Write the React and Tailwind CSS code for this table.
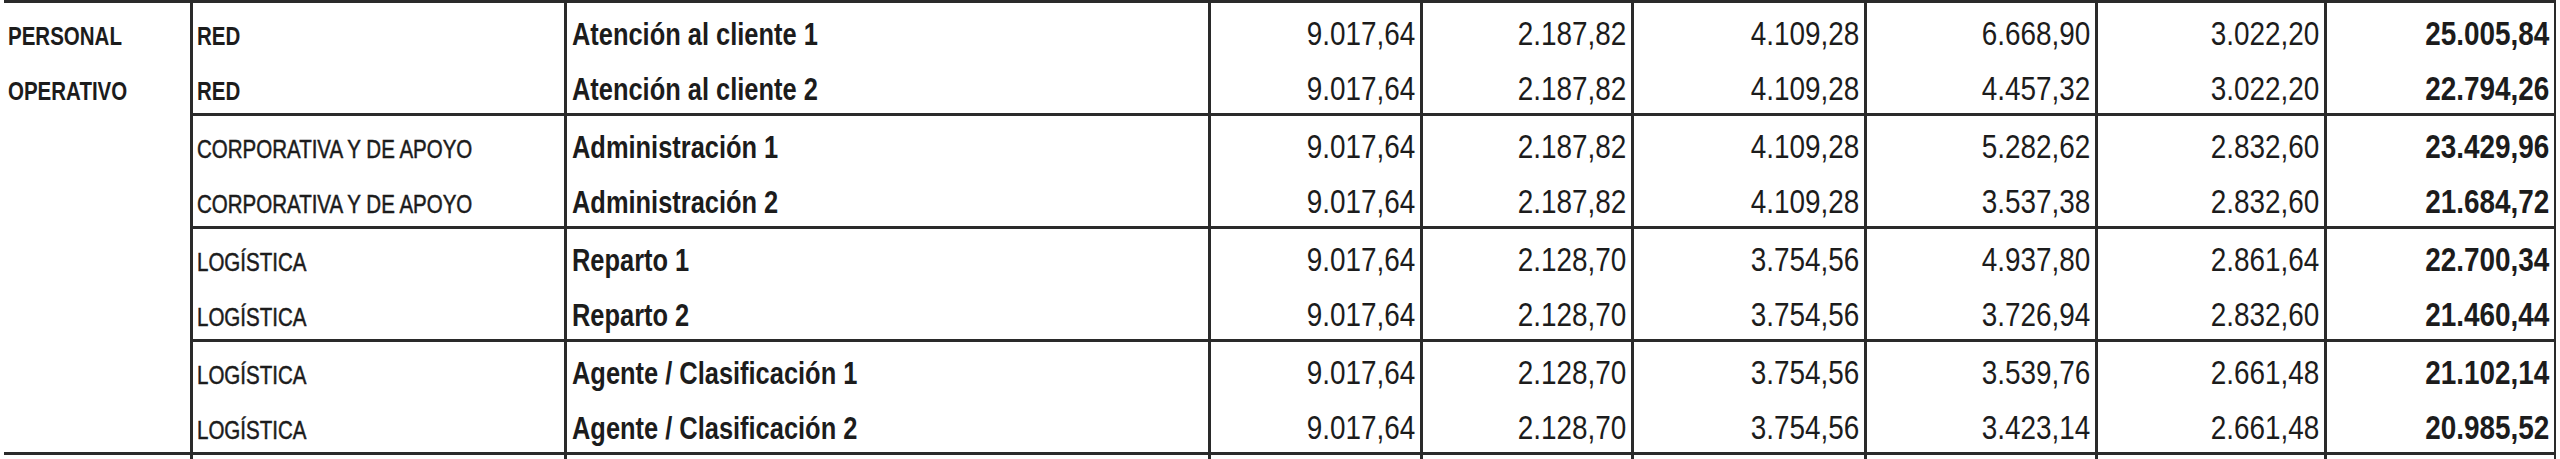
import React from "react";

const FONT = { fontFamily: '"Liberation Sans", Arial, sans-serif' };

const groups = [
  [
    { area: "RED", areaBold: true, job: "Atención al cliente 1", v: ["9.017,64", "2.187,82", "4.109,28", "6.668,90", "3.022,20"], t: "25.005,84" },
    { area: "RED", areaBold: true, job: "Atención al cliente 2", v: ["9.017,64", "2.187,82", "4.109,28", "4.457,32", "3.022,20"], t: "22.794,26" },
  ],
  [
    { area: "CORPORATIVA Y DE APOYO", job: "Administración 1", v: ["9.017,64", "2.187,82", "4.109,28", "5.282,62", "2.832,60"], t: "23.429,96" },
    { area: "CORPORATIVA Y DE APOYO", job: "Administración 2", v: ["9.017,64", "2.187,82", "4.109,28", "3.537,38", "2.832,60"], t: "21.684,72" },
  ],
  [
    { area: "LOGÍSTICA", job: "Reparto 1", v: ["9.017,64", "2.128,70", "3.754,56", "4.937,80", "2.861,64"], t: "22.700,34" },
    { area: "LOGÍSTICA", job: "Reparto 2", v: ["9.017,64", "2.128,70", "3.754,56", "3.726,94", "2.832,60"], t: "21.460,44" },
  ],
  [
    { area: "LOGÍSTICA", job: "Agente / Clasificación 1", v: ["9.017,64", "2.128,70", "3.754,56", "3.539,76", "2.661,48"], t: "21.102,14" },
    { area: "LOGÍSTICA", job: "Agente / Clasificación 2", v: ["9.017,64", "2.128,70", "3.754,56", "3.423,14", "2.661,48"], t: "20.985,52" },
  ],
];

const numW = ["w-[212px]", "w-[211px]", "w-[233px]", "w-[231px]", "w-[229px]"];

function L({ children }) {
  return <span className="inline-block whitespace-nowrap scale-x-[0.82] origin-left">{children}</span>;
}
function R({ children }) {
  return <span className="inline-block whitespace-nowrap scale-x-[0.82] origin-right">{children}</span>;
}

function Row({ r }) {
  return (
    <div className="flex h-[55px]">
      <div className={`w-[374px] h-full border-l-[3px] border-[#2a2a2a] flex items-end pl-[4px] pb-[9px] text-[25px] leading-none ${r.areaBold ? "font-bold" : "font-normal [-webkit-text-stroke:0.5px_#1c1c1c]"}`}>
        <L>{r.area}</L>
      </div>
      <div className="w-[644px] h-full border-l-[3px] border-[#2a2a2a] flex items-end pl-[5px] pb-[8px] text-[31px] leading-none font-bold">
        <L>{r.job}</L>
      </div>
      {r.v.map((x, i) => (
        <div key={i} className={`${numW[i]} h-full border-l-[3px] border-[#2a2a2a] flex items-end justify-end pr-[5px] pb-[8px] text-[34px] leading-none font-normal`}>
          <R>{x}</R>
        </div>
      ))}
      <div className="w-[232px] h-full border-l-[3px] border-r-[2px] border-[#2a2a2a] flex items-end justify-end pr-[5px] pb-[8px] text-[34px] leading-none font-bold">
        <R>{r.t}</R>
      </div>
    </div>
  );
}

function Stub() {
  const ws = ["w-[374px]", "w-[644px]", ...numW];
  return (
    <div className="flex h-[4px]">
      {ws.map((w, i) => (
        <div key={i} className={`${w} h-full border-l-[3px] border-[#2a2a2a]`} />
      ))}
      <div className="w-[232px] h-full border-l-[3px] border-r-[2px] border-[#2a2a2a]" />
    </div>
  );
}

export default function App() {
  return (
    <div className="w-[2560px] h-[459px] bg-white overflow-hidden text-[#1c1c1c]" style={FONT}>
      <div className="flex items-start">
        <div className="ml-[4px] w-[186px] h-[455px] border-y-[3px] border-[#2a2a2a] flex flex-col">
          <div className="h-[55px] flex items-end pl-[4px] pb-[9px] text-[25px] leading-none font-bold"><L>PERSONAL</L></div>
          <div className="h-[55px] flex items-end pl-[4px] pb-[9px] text-[25px] leading-none font-bold"><L>OPERATIVO</L></div>
        </div>
        <div className="w-[2366px] flex flex-col">
          <div className="h-[3px] bg-[#2a2a2a]" />
          {groups.map((g, gi) => (
            <div key={gi} className="border-b-[3px] border-[#2a2a2a]">
              {g.map((r, ri) => (
                <Row key={ri} r={r} />
              ))}
            </div>
          ))}
          <Stub />
        </div>
      </div>
    </div>
  );
}
